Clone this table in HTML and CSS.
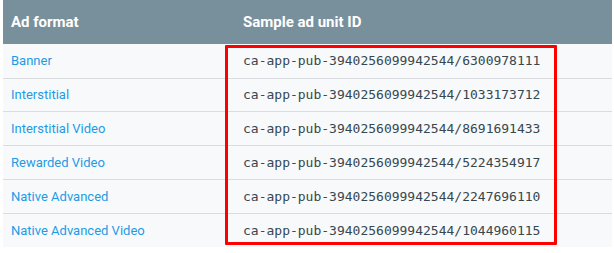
FILE: index.html
```html
<!DOCTYPE html>
<html>
<head>
<meta charset="utf-8">
<link rel="stylesheet" href="styles.css">
</head>
<body>
<div class="wrap">
  <table class="ids">
    <thead>
      <tr><th class="c1">Ad format</th><th class="c2">Sample ad unit ID</th></tr>
    </thead>
    <tbody>
      <tr><td class="c1"><a href="#">Banner</a></td><td class="c2"><code>ca-app-pub-3940256099942544/6300978111</code></td></tr>
      <tr><td class="c1"><a href="#">Interstitial</a></td><td class="c2"><code>ca-app-pub-3940256099942544/1033173712</code></td></tr>
      <tr><td class="c1"><a href="#">Interstitial Video</a></td><td class="c2"><code>ca-app-pub-3940256099942544/8691691433</code></td></tr>
      <tr><td class="c1"><a href="#">Rewarded Video</a></td><td class="c2"><code>ca-app-pub-3940256099942544/5224354917</code></td></tr>
      <tr><td class="c1"><a href="#">Native Advanced</a></td><td class="c2"><code>ca-app-pub-3940256099942544/2247696110</code></td></tr>
      <tr><td class="c1"><a href="#">Native Advanced Video</a></td><td class="c2"><code>ca-app-pub-3940256099942544/1044960115</code></td></tr>
    </tbody>
  </table>
  <div class="highlight"></div>
</div>
</body>
</html>
```
FILE: styles.css
```css
html, body { margin: 0; padding: 0; background: #fff; }
body { font-family: Roboto, "Noto Sans", sans-serif; }
.wrap { position: relative; margin-left: 3px; width: 609px; }
.ids { border-collapse: collapse; width: 100%; table-layout: fixed; }
.ids th {
  background: #78909c; color: #fff; text-align: left;
  font-weight: 700; font-size: 15px; height: 44px; padding: 0 8px;
  box-sizing: border-box;
}
.ids td {
  background: #f8f9fa; height: 33.8px; padding: 0 8px; box-sizing: border-box;
  border-top: 1px solid #dadce0; font-size: 13px;
}
.ids tbody tr:first-child td { border-top: 0; height: 34px; }
.c1 { width: 232px; }
.ids a { color: #1e9be6; text-decoration: none; }
.ids code { font-family: "DejaVu Sans Mono", monospace; font-size: 13px; color: #37474f; }
.highlight {
  position: absolute; left: 222px; top: 45px; width: 332px; height: 200px;
  border: 3px solid #f00; box-sizing: border-box; border-radius: 1px;
}
```
